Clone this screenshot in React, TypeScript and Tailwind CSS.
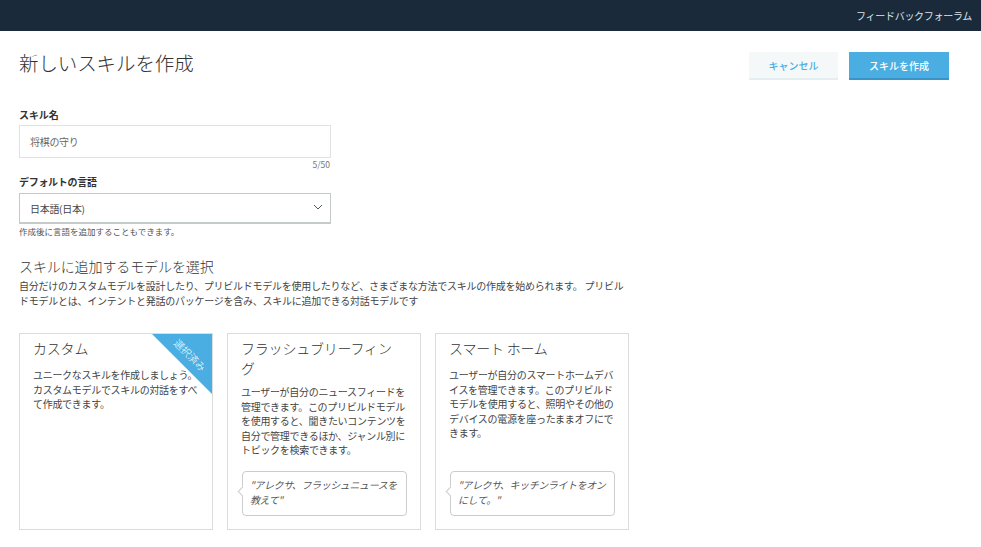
const font = { fontFamily: '"Noto Sans CJK JP", "Noto Sans", sans-serif' };

function Card({ title, body, quote, selected, twoLine }: { title: string; body: string; quote?: string; selected?: boolean; twoLine?: boolean }) {
  return (
    <div className="relative flex h-[197px] w-[194px] flex-col overflow-hidden border border-[#dcdcdc] bg-white px-[13px] pb-[13px] pt-[4px]">
      <h3 className="pr-[8px] text-[14px] font-light leading-[20px] tracking-[-0.2px] text-[#333]">{title}</h3>
      <p className={`${twoLine ? "mt-[7px]" : "mt-[10px]"} text-[10px] leading-[14.6px] tracking-[-0.3px] text-[#444]`}>{body}</p>
      {quote && (
        <div className="relative ml-[1px] mt-auto h-[45px] rounded-[4px] border border-[#ccc] bg-white px-[7px] pt-[5px] text-[10px] italic leading-[15px] tracking-[-0.4px] text-[#555]">
          {quote}
          <span className="absolute left-[-4px] top-[16px] h-[7px] w-[7px] rotate-45 border-b border-l border-[#ccc] bg-white" />
        </div>
      )}
      {selected && (
        <>
          <svg className="absolute right-0 top-0" width="60" height="60" viewBox="0 0 60 60">
            <polygon points="0,0 60,0 60,60" fill="#4aaee2" />
          </svg>
          <span className="absolute right-[-3px] top-[15px] w-[50px] rotate-45 text-center text-[10px] font-light leading-[12px] text-white">
            選択済み
          </span>
        </>
      )}
    </div>
  );
}

export default function App() {
  return (
    <div className="h-[547px] w-[981px] overflow-hidden bg-white" style={font}>
      <header className="flex h-[31px] items-center justify-end bg-[#1b2a3b] pr-[9px] text-[10px] tracking-[-0.3px] text-[#dfe3e6]">
        フィードバックフォーラム
      </header>
      <main className="px-[19px]">
        <div className="flex items-start justify-between pr-[13px] pt-[17px]">
          <h1 className="text-[19.5px] font-light leading-[30px] tracking-[-0.1px] text-[#333]">新しいスキルを作成</h1>
          <div className="mt-[4px] flex gap-[11px]">
            <button className="h-[28px] w-[89px] border-b-2 border-[#e4edf0] bg-[#f4f8f9] text-[10px] font-medium text-[#4aaee2]">
              キャンセル
            </button>
            <button className="h-[28px] w-[100px] border-b-2 border-[#3a94c8] bg-[#4aaee2] text-[10px] font-medium text-white">
              スキルを作成
            </button>
          </div>
        </div>
        <label className="mt-[27px] block text-[10px] font-bold leading-[15px] tracking-[-0.1px] text-[#333]">スキル名</label>
        <div className="mt-[3px] flex h-[33px] w-[312px] items-center border border-[#dfe3e3] bg-white pl-[10px] text-[10px] tracking-[-0.3px] text-[#666]">
          将棋の守り
        </div>
        <div className="w-[312px] pr-[1px] text-right text-[8.5px] leading-[13px] text-[#777]">5/50</div>
        <label className="mt-[3px] block text-[10px] font-bold leading-[15px] tracking-[-0.3px] text-[#333]">デフォルトの言語</label>
        <div className="mt-[4px] flex h-[31px] w-[312px] items-center justify-between border border-b-2 border-[#c5cbcb] bg-white pl-[10px] pr-[7px] text-[10px] tracking-[-0.3px] text-[#444]">
          日本語(日本)
          <svg width="10" height="6" viewBox="0 0 10 6" fill="none" stroke="#555" strokeWidth="1" className="mb-[3px]">
            <path d="M1 1l4 4 4-4" />
          </svg>
        </div>
        <p className="mt-0 text-[8.5px] leading-[14px] text-[#555]">作成後に言語を追加することもできます。</p>
        <h2 className="mt-[18px] text-[14px] font-light leading-[21px] tracking-[-0.1px] text-[#333]">スキルに追加するモデルを選択</h2>
        <p className="mt-[1px] w-[608px] text-[10px] leading-[15px] tracking-[-0.25px] text-[#444]">
          自分だけのカスタムモデルを設計したり、プリビルドモデルを使用したりなど、さまざまな方法でスキルの作成を始められます。 プリビルドモデルとは、インテントと発話のパッケージを含み、スキルに追加できる対話モデルです
        </p>
        <div className="mt-[25px] flex gap-[14px]">
          <Card selected title="カスタム" body="ユニークなスキルを作成しましょう。カスタムモデルでスキルの対話をすべて作成できます。" />
          <Card
            twoLine
            title="フラッシュブリーフィング"
            body="ユーザーが自分のニュースフィードを管理できます。このプリビルドモデルを使用すると、聞きたいコンテンツを自分で管理できるほか、ジャンル別にトピックを検索できます。"
            quote={'"アレクサ、フラッシュニュースを教えて"'}
          />
          <Card
            title="スマート ホーム"
            body="ユーザーが自分のスマートホームデバイスを管理できます。このプリビルドモデルを使用すると、照明やその他のデバイスの電源を座ったままオフにできます。"
            quote={'"アレクサ、キッチンライトをオンにして。"'}
          />
        </div>
      </main>
    </div>
  );
}
